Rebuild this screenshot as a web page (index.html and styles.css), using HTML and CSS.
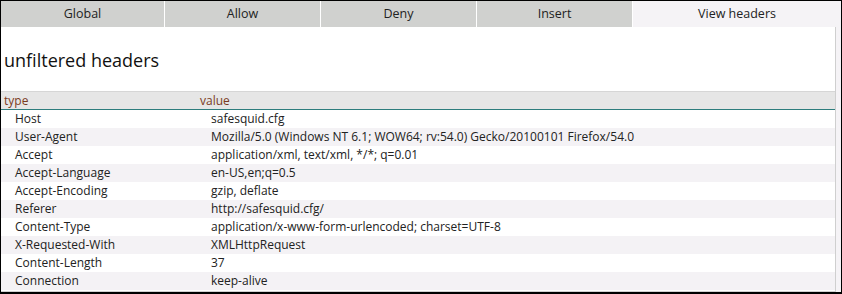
FILE: index.html
```html
<!DOCTYPE html>
<html lang="en">
<head>
    <meta charset="UTF-8">
    <title>View headers</title>
    <link rel="stylesheet" href="styles.css">
</head>
<body>
    <div class="panel">
        <div class="tabs">
            <div class="tab tab-global">Global</div>
            <div class="tab">Allow</div>
            <div class="tab">Deny</div>
            <div class="tab">Insert</div>
            <div class="tab tab-active">View headers</div>
        </div>

        <div class="content">
            <h3 class="title">unfiltered headers</h3>

            <table class="headers">
                <thead>
                    <tr>
                        <th class="col-type">type</th>
                        <th>value</th>
                    </tr>
                </thead>
                <tbody>
                    <tr><td>Host</td><td>safesquid.cfg</td></tr>
                    <tr><td>User-Agent</td><td>Mozilla/5.0 (Windows NT 6.1; WOW64; rv:54.0) Gecko/20100101 Firefox/54.0</td></tr>
                    <tr><td>Accept</td><td>application/xml, text/xml, */*; q=0.01</td></tr>
                    <tr><td>Accept-Language</td><td>en-US,en;q=0.5</td></tr>
                    <tr><td>Accept-Encoding</td><td>gzip, deflate</td></tr>
                    <tr><td>Referer</td><td>http://safesquid.cfg/</td></tr>
                    <tr><td>Content-Type</td><td>application/x-www-form-urlencoded; charset=UTF-8</td></tr>
                    <tr><td>X-Requested-With</td><td>XMLHttpRequest</td></tr>
                    <tr><td>Content-Length</td><td>37</td></tr>
                    <tr><td>Connection</td><td>keep-alive</td></tr>
                </tbody>
            </table>
        </div>
    </div>
</body>
</html>
```

FILE: styles.css
```css
html, body {
    margin: 0;
    padding: 0;
}

body {
    font-family: 'Open Sans', 'Noto Sans', sans-serif;
    font-size: 12px;
    color: #222;
    background: #f5f3f6;
}

.panel {
    width: 842px;
    height: 294px;
    box-sizing: border-box;
    border: 1px solid #000;
    border-bottom-width: 2px;
    background: #f5f3f6;
    display: flex;
    flex-direction: column;
}

.tabs {
    display: flex;
    height: 26px;
    background: #d0d1cf;
}

.tab {
    width: 155px;
    border-left: 1px solid #fff;
    text-align: center;
    line-height: 26px;
    font-size: 12.5px;
    color: #222;
}

.tab-global {
    width: 163px;
    border-left: none;
}

.tab-active {
    flex: 1;
    background: #f5f3f6;
}

.content {
    flex: 1;
    margin-right: 5px;
    background: #fff;
    border-right: 1px solid #cfcfcf;
    border-bottom: 1px solid #cfcfcf;
}

.title {
    margin: 0;
    padding: 21px 0 0 3px;
    height: 45px;
    box-sizing: border-box;
    font-size: 18px;
    font-weight: normal;
    line-height: 24px;
    color: #111;
}

.headers {
    width: 100%;
    margin-top: 19px;
    border-collapse: collapse;
}

.headers th {
    height: 17px;
    padding: 0 0 0 3px;
    text-align: left;
    font-weight: normal;
    color: #7a3b1e;
    background: #e6e6e6;
    border-top: 1px solid #d6d6d6;
    border-bottom: 1px solid #2d7d7d;
    line-height: 17px;
}

.headers .col-type {
    width: 193px;
}

.headers td {
    height: 18px;
    padding: 0 0 0 14px;
    line-height: 18px;
    color: #222;
}

.headers tbody tr:nth-child(even) td {
    background: #f4f2f5;
}
```
